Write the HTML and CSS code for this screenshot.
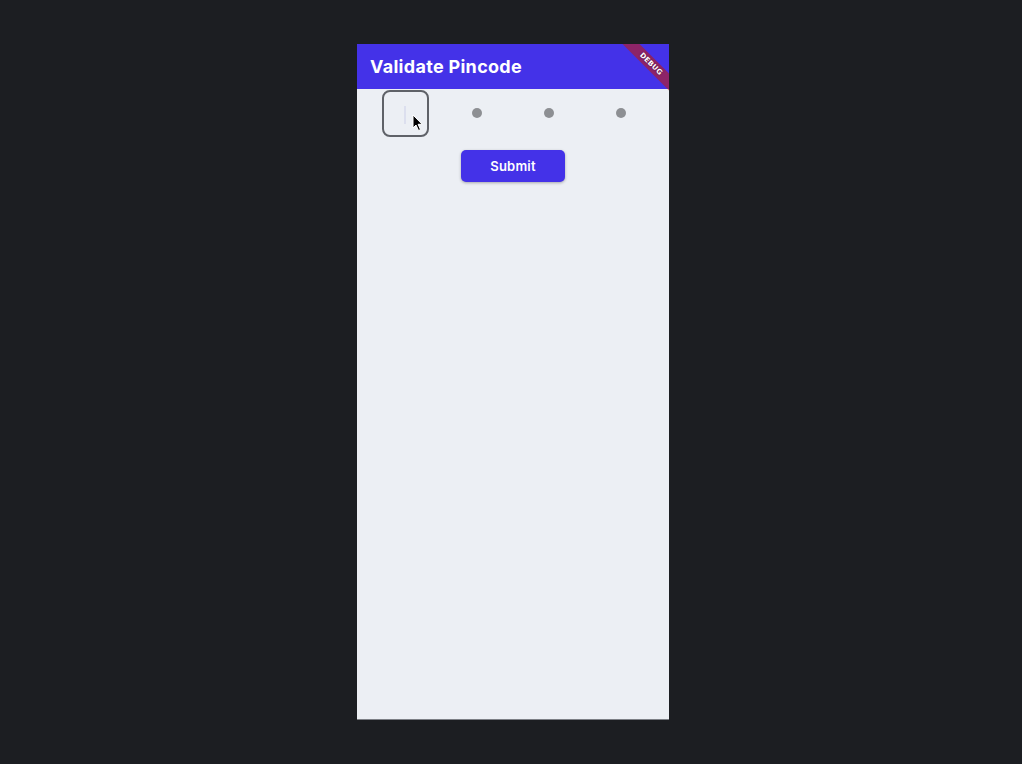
FILE: index.html
```html
<!DOCTYPE html>
<html>
<head>
<meta charset="utf-8">
<link rel="stylesheet" href="styles.css">
</head>
<body>
<div class="stage">
  <div class="phone">
    <header class="appbar">
      <h1 class="title">Validate Pincode</h1>
    </header>
    <div class="banner"><span>DEBUG</span></div>
    <main class="content">
      <div class="pin-row">
        <div class="cell">
          <div class="pin-box"><span class="caret"></span></div>
          <svg class="pointer" width="12" height="18" viewBox="0 0 12 18">
            <path d="M1 1 L1 14 L4 11 L6.5 16.5 L8.5 15.6 L6.1 10.3 L10.2 10.3 Z" fill="#000" stroke="#fff" stroke-width="1" stroke-linejoin="round"/>
          </svg>
        </div>
        <div class="cell"><span class="dot"></span></div>
        <div class="cell"><span class="dot"></span></div>
        <div class="cell"><span class="dot"></span></div>
      </div>
      <div class="actions">
        <button class="submit">Submit</button>
      </div>
    </main>
  </div>
</div>
</body>
</html>
```
FILE: styles.css
```css
html, body {
  margin: 0;
  padding: 0;
  background: #1c1e22;
  height: 100%;
}
.stage {
  padding: 44px 0 0 357px;
}
.phone {
  position: relative;
  width: 312px;
  height: 675px;
  background: #eceff4;
  overflow: hidden;
  display: flex;
  flex-direction: column;
  box-shadow: 0 1px 0 #7c7f85;
  font-family: "Poppins", "Inter", "Open Sans", sans-serif;
}
.appbar {
  height: 45px;
  background: #4432e8;
  display: flex;
  align-items: center;
  padding: 0 13px;
  flex-shrink: 0;
}
.title {
  margin: 0;
  color: #fff;
  font-family: "Inter", "Open Sans", sans-serif;
  font-size: 18px;
  font-weight: 700;
  letter-spacing: 0.3px;
  position: relative;
  top: 0;
}
.banner {
  position: absolute;
  top: 14px;
  left: 252px;
  width: 84px;
  height: 12px;
  background: rgba(183, 28, 28, 0.63);
  transform: rotate(45deg);
  display: flex;
  align-items: center;
  justify-content: center;
}
.banner span {
  color: #fff;
  font-family: "DejaVu Sans", sans-serif;
  font-size: 7px;
  font-weight: 900;
  letter-spacing: 0.2px;
  text-shadow: 0 0 2px rgba(0,0,0,0.5);
}
.content {
  flex: 1;
  padding: 1px 12px 0;
}
.pin-row {
  display: grid;
  grid-template-columns: repeat(4, 72px);
  height: 47px;
}
.cell {
  position: relative;
  display: flex;
  align-items: center;
  justify-content: center;
}
.pin-box {
  width: 47px;
  height: 47px;
  box-sizing: border-box;
  border: 2px solid #5f6268;
  border-radius: 8px;
  display: flex;
  align-items: center;
  justify-content: center;
}
.caret {
  width: 1.5px;
  height: 18px;
  background: #dcdfee;
  margin-left: 0;
  margin-top: 3px;
}
.pointer {
  position: absolute;
  left: 43px;
  top: 24px;
}
.dot {
  width: 10px;
  height: 10px;
  border-radius: 50%;
  background: #8d8f93;
  margin-top: -1px;
}
.actions {
  display: flex;
  justify-content: center;
  padding-top: 13px;
}
.submit {
  width: 104px;
  height: 32px;
  border: none;
  border-radius: 5px;
  background: #4432e8;
  color: #fff;
  font-family: "Inter", "Open Sans", sans-serif;
  font-size: 13px;
  font-weight: 600;
  letter-spacing: 0.2px;
  box-shadow: 0 1px 3px rgba(0,0,0,0.3);
  padding: 0;
}
```
